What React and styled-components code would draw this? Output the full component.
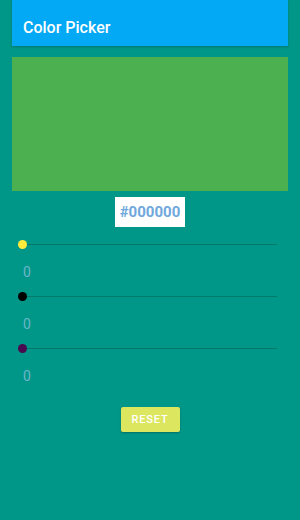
import React, { useState } from 'react'
import styled, { createGlobalStyle } from 'styled-components'

const GlobalStyle = createGlobalStyle`
  html, body {
    margin: 0;
    padding: 0;
    background: #009688;
    font-family: Roboto, "Noto Sans", sans-serif;
  }
`

const Page = styled.div`
  width: 300px;
  height: 520px;
  background: #009688;
  padding: 0 12px;
  box-sizing: border-box;
  display: flex;
  flex-direction: column;
`

const AppBar = styled.div`
  height: 46px;
  background: #03a9f4;
  box-shadow: 0 1px 2px rgba(0, 0, 0, 0.2);
  display: flex;
  align-items: flex-end;
  padding: 0 0 9px 11px;
  box-sizing: border-box;
`

const Title = styled.h1`
  margin: 0;
  color: #fff;
  font-size: 16px;
  font-weight: 500;
`

const Preview = styled.div`
  margin-top: 11px;
  height: 134px;
  background: ${p => p.color};
`

const HexBox = styled.div`
  align-self: center;
  margin-top: 6px;
  width: 70px;
  height: 30px;
  background: #fff;
  display: flex;
  align-items: center;
  justify-content: center;
  color: #6fa8dc;
  font-size: 15px;
  font-weight: 700;
`

const Sliders = styled.div`
  margin-top: 12px;
  padding: 0 11px 0 7px;
  display: flex;
  flex-direction: column;
`

const SliderRow = styled.div`
  height: 52px;
  display: flex;
  flex-direction: column;
`

const Track = styled.div`
  position: relative;
  height: 10px;
  display: flex;
  align-items: center;
  &::before {
    content: '';
    flex: 1;
    height: 1px;
    background: #00796b;
  }
`

const Thumb = styled.span`
  position: absolute;
  left: -1.5px;
  top: 0.5px;
  width: 9px;
  height: 9px;
  border-radius: 50%;
  background: ${p => p.color};
`

const Value = styled.div`
  margin-top: 15px;
  margin-left: 4px;
  color: #6ab7c9;
  font-size: 14px;
`

const ResetButton = styled.button`
  align-self: center;
  margin-top: 12px;
  width: 59px;
  height: 25px;
  border: 0;
  border-radius: 2px;
  background: #dce65e;
  color: #fff;
  font-family: Roboto, sans-serif;
  font-size: 11px;
  font-weight: 500;
  letter-spacing: 0.8px;
  box-shadow: 0 1px 2px rgba(0, 0, 0, 0.25);
  padding: 0;
`

const sliders = [
  { id: 'r', thumb: '#ffeb3b' },
  { id: 'g', thumb: '#000' },
  { id: 'b', thumb: '#4a0a4f' },
]

const App = () => {
  const [values] = useState({ r: 0, g: 0, b: 0 })

  return (
    <>
      <GlobalStyle />
      <Page>
        <AppBar>
          <Title>Color Picker</Title>
        </AppBar>
        <Preview color="#4caf50" />
        <HexBox>#000000</HexBox>
        <Sliders>
          {sliders.map(s => (
            <SliderRow key={s.id}>
              <Track>
                <Thumb color={s.thumb} />
              </Track>
              <Value>{values[s.id]}</Value>
            </SliderRow>
          ))}
        </Sliders>
        <ResetButton>RESET</ResetButton>
      </Page>
    </>
  )
}

export default App
